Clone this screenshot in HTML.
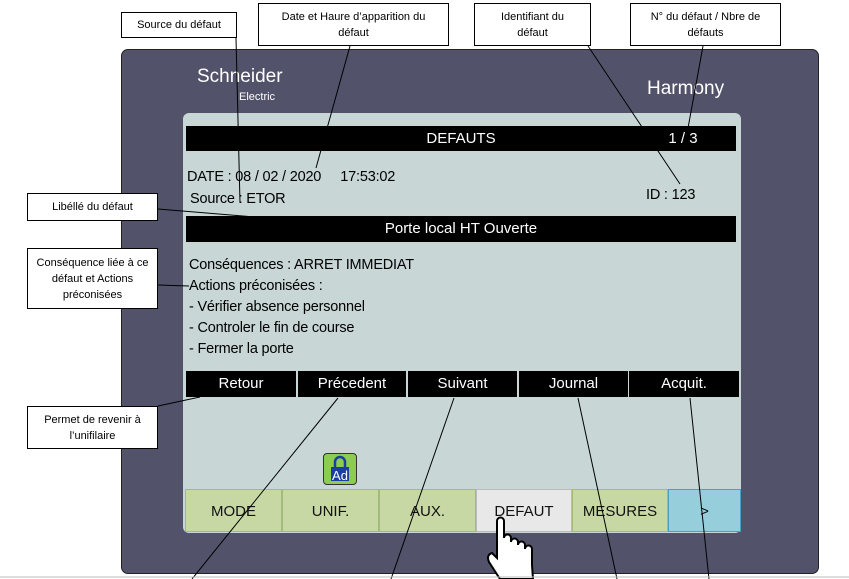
<!DOCTYPE html>
<html><head><meta charset="utf-8"><style>
body{margin:0;width:849px;height:579px;background:#fff;position:relative;overflow:hidden;font-family:"Liberation Sans",sans-serif}
.a{position:absolute}
.co{position:absolute;background:#fff;border:1px solid #000;font-size:11px;text-align:center;line-height:16px;box-sizing:border-box;display:flex;align-items:center;justify-content:center;padding:0 8px}
.dev{left:121px;top:49px;width:698px;height:525px;background:#52526a;border-radius:7px;border:1px solid #222;box-sizing:border-box}
.scr{left:183px;top:113px;width:558px;height:420px;background:#c8d6d6;border-radius:6px}
.bar{background:#000;color:#fff;font-size:15px;text-align:center;line-height:25px}
.t{font-size:14.5px;color:#000;white-space:nowrap;letter-spacing:-0.2px}
.btn{background:#000;color:#fff;font-size:15px;text-align:center;top:371px;height:26px;line-height:26px}
.tab{top:489px;height:43px;line-height:43px;background:#c8d8a4;border:1px solid #a0bc78;box-sizing:border-box;text-align:center;font-size:15px;color:#111}
</style></head><body>
<div class="a dev"></div>
<div class="a" style="left:197px;top:66px;color:#fff;font-size:19px">Schneider</div>
<div class="a" style="left:239px;top:91px;color:#fff;font-size:11px">Electric</div>
<div class="a" style="left:647px;top:78px;color:#fff;font-size:19px">Harmony</div>
<div class="a scr"></div>
<div class="a bar" style="left:186px;top:126px;width:550px;height:25px">DEFAUTS</div>
<div class="a" style="left:630px;top:126px;width:106px;height:25px;color:#fff;font-size:15px;line-height:25px;text-align:center">1 / 3</div>
<div class="a t" style="left:187px;top:169px">DATE : 08 / 02 / 2020&nbsp;&nbsp;&nbsp;&nbsp;&nbsp;17:53:02</div>
<div class="a t" style="left:190px;top:191px">Source : ETOR</div>
<div class="a t" style="left:646px;top:187px">ID : 123</div>
<div class="a bar" style="left:186px;top:216px;width:550px;height:26px;line-height:26px">Porte local HT Ouverte</div>
<div class="a t" style="left:189px;top:255px;line-height:21px">Conséquences : ARRET IMMEDIAT<br>Actions préconisées :<br>- Vérifier absence personnel<br>- Controler le fin de course<br>- Fermer la porte</div>
<div class="a btn" style="left:186px;width:110px">Retour</div>
<div class="a btn" style="left:298px;width:108px">Précedent</div>
<div class="a btn" style="left:408px;width:109px">Suivant</div>
<div class="a btn" style="left:519px;width:109px">Journal</div>
<div class="a btn" style="left:629px;width:110px">Acquit.</div>
<div class="a" style="left:323px;top:453px;width:34px;height:32px;background:#8ccc50;border:1px solid #333;border-radius:4px;box-sizing:border-box"></div>
<svg class="a" style="left:323px;top:453px" width="34" height="32"><path d="M12 14 V9 a5 5 0 0 1 10 0 V14" fill="none" stroke="#1a3fa0" stroke-width="2.5"/><rect x="8" y="14" width="18" height="14" fill="#1a3fa0"/><text x="17" y="27" font-size="13" fill="#fff" text-anchor="middle" font-family="Liberation Sans">Ad</text></svg>
<div class="a tab" style="left:185px;width:97px">MODE</div>
<div class="a tab" style="left:282px;width:97px">UNIF.</div>
<div class="a tab" style="left:379px;width:97px">AUX.</div>
<div class="a tab" style="left:476px;width:96px;background:#e8e8e8;border-color:#bbb">DEFAUT</div>
<div class="a tab" style="left:572px;width:96px">MESURES</div>
<div class="a tab" style="left:668px;width:73px;background:#96cedc;border-color:#4aa0c0">&gt;</div>
<div class="co" style="left:121px;top:12px;width:116px;height:26px">Source du défaut</div>
<div class="co" style="left:258px;top:3px;width:191px;height:43px;padding:0 14px">Date et Haure d’apparition du défaut</div>
<div class="co" style="left:474px;top:3px;width:117px;height:43px">Identifiant du<br>défaut</div>
<div class="co" style="left:630px;top:3px;width:151px;height:43px">N° du défaut / Nbre de<br>défauts</div>
<div class="co" style="left:27px;top:193px;width:131px;height:28px">Libéllé du défaut</div>
<div class="co" style="left:27px;top:248px;width:131px;height:61px">Conséquence liée à ce défaut et Actions préconisées</div>
<div class="co" style="left:27px;top:406px;width:131px;height:43px">Permet de revenir à l’unifilaire</div>
<svg class="a" style="left:0;top:0" width="849" height="579">
<g stroke="#000" stroke-width="1" fill="none">
<line x1="236" y1="38" x2="240" y2="203"/>
<line x1="350" y1="46" x2="316" y2="168"/>
<line x1="588" y1="46" x2="680" y2="184"/>
<line x1="703" y1="46" x2="684" y2="150"/>
<line x1="158" y1="209" x2="255" y2="217"/>
<line x1="158" y1="285" x2="189" y2="286"/>
<line x1="158" y1="406" x2="200" y2="397"/>
<line x1="338" y1="398" x2="192" y2="579"/>
<line x1="454" y1="398" x2="391" y2="579"/>
<line x1="578" y1="398" x2="617" y2="579"/>
<line x1="690" y1="398" x2="709" y2="579"/>
</g>
<path d="M497 545 V521 a3.5 3.5 0 0 1 7 0 V538 a3.5 3.5 0 0 1 7 0 V542 a3.5 3.5 0 0 1 7 0 V545 a3.5 3.5 0 0 1 7 0 V549 a3.5 3.5 0 0 1 7 0 V565 L533 579 H500 L489 562 Q486 555 492 553 L497 558 Z" fill="#fff" stroke="#000" stroke-width="2"/>
<line x1="0" y1="577" x2="849" y2="577" stroke="#bbb"/>
</svg>
</body></html>
